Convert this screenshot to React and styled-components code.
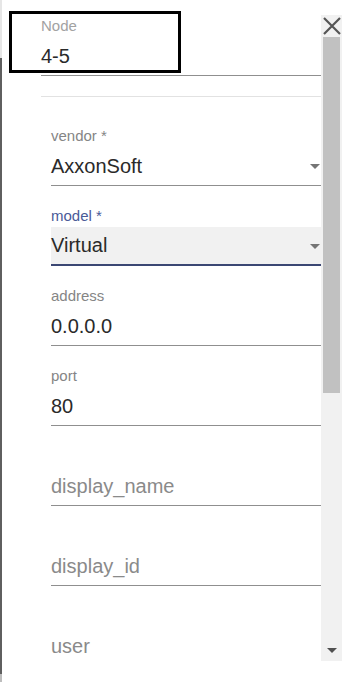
import React from 'react'
import styled, { createGlobalStyle } from 'styled-components'

const GlobalStyle = createGlobalStyle`
  html, body {
    margin: 0;
    padding: 0;
    background: #fff;
  }
  * {
    box-sizing: border-box;
  }
`

const Page = styled.div`
  display: flex;
  width: 360px;
  height: 682px;
  overflow: hidden;
  background: #fff;
  font-family: 'Liberation Sans', Arial, sans-serif;
`
const Edge = styled.div`
  width: 2px;
  flex: none;
  background: linear-gradient(#e6e6e6 0 58px, #5f5f5f 58px 674px, #bdbdbd 674px);
`
const Dialog = styled.div`
  position: relative;
  flex: 1;
  display: flex;
  align-items: flex-start;
`
const Highlight = styled.div`
  position: absolute;
  left: 7px;
  top: 11px;
  width: 172px;
  height: 62px;
  border: 3px solid #000;
  pointer-events: none;
`
const Content = styled.div`
  width: 319px;
  height: 661px;
  overflow: hidden;
  padding-left: 39px;
`
const NodeField = styled.div`
  padding-top: 16px;
`
const Divider = styled.div`
  margin-top: 20px;
  border-top: 1px solid #e2e2e2;
`
const Fields = styled.div`
  display: flex;
  flex-direction: column;
  gap: 20px;
  margin-top: 29px;
  padding-left: 10px;
`
const Field = styled.div`
  display: flex;
  flex-direction: column;
`
const Label = styled.div`
  height: 20px;
  margin-bottom: 1px;
  font-size: 15px;
  line-height: 20px;
  color: ${p => (p.$focused ? '#4a5a98' : p.$faint ? '#a2a2a2' : '#858585')};
`
const Value = styled.div`
  position: relative;
  height: 39px;
  padding-right: 20px;
  font-size: 20px;
  line-height: ${p => (p.$focused ? '37px' : '38px')};
  color: ${p => (p.$placeholder ? '#8a8a8a' : '#2a2a2a')};
  background: ${p => (p.$focused ? '#f1f1f1' : 'transparent')};
  border-bottom: ${p => (p.$focused ? '2px solid #3b4773' : p.$bare ? '1px solid transparent' : '1px solid #8f8f8f')};
  white-space: nowrap;
`
const Caret = styled.span`
  position: absolute;
  right: 1px;
  top: 50%;
  margin-top: -2px;
  width: 0;
  height: 0;
  border-left: 5px solid transparent;
  border-right: 5px solid transparent;
  border-top: 5px solid #757575;
`
const Rail = styled.div`
  width: 21px;
  flex: none;
  margin-top: 15px;
  height: 646px;
  display: flex;
  flex-direction: column;
  background: #f1f1f1;
`
const CloseButton = styled.button`
  height: 22px;
  padding: 0;
  border: none;
  background: transparent;
  display: flex;
  align-items: center;
  justify-content: center;
  cursor: pointer;
`
const Thumb = styled.div`
  height: 356px;
  margin: 0 2px;
  background: #c1c1c1;
`
const Track = styled.div`
  flex: 1;
`
const StepDown = styled.div`
  height: 17px;
  display: flex;
  align-items: flex-start;
  justify-content: center;
  padding-top: 4px;
  &::after {
    content: '';
    width: 0;
    height: 0;
    border-left: 5px solid transparent;
    border-right: 5px solid transparent;
    border-top: 5px solid #505050;
  }
`

const fields = [
  { label: 'vendor *', value: 'AxxonSoft', select: true },
  { label: 'model *', value: 'Virtual', select: true, focused: true },
  { label: 'address', value: '0.0.0.0' },
  { label: 'port', value: '80' },
  { label: '', value: 'display_name', placeholder: true },
  { label: '', value: 'display_id', placeholder: true },
  { label: '', value: 'user', placeholder: true, bare: true },
]

const App = () => (
  <Page>
    <GlobalStyle />
    <Edge />
    <Dialog>
      <Content>
        <NodeField>
          <Label $faint>Node</Label>
          <Value>4-5</Value>
        </NodeField>
        <Divider />
        <Fields>
          {fields.map(f => (
            <Field key={f.value}>
              <Label $focused={f.focused}>{f.label}</Label>
              <Value $focused={f.focused} $placeholder={f.placeholder} $bare={f.bare}>
                {f.value}
                {f.select && <Caret />}
              </Value>
            </Field>
          ))}
        </Fields>
      </Content>
      <Rail>
        <CloseButton aria-label="close">
          <svg width="20" height="18" viewBox="0 0 20 18">
            <path d="M2 1 L18 17 M18 1 L2 17" stroke="#555" strokeWidth="2.2" fill="none" />
          </svg>
        </CloseButton>
        <Thumb />
        <Track />
        <StepDown />
      </Rail>
      <Highlight />
    </Dialog>
  </Page>
)

export default App
